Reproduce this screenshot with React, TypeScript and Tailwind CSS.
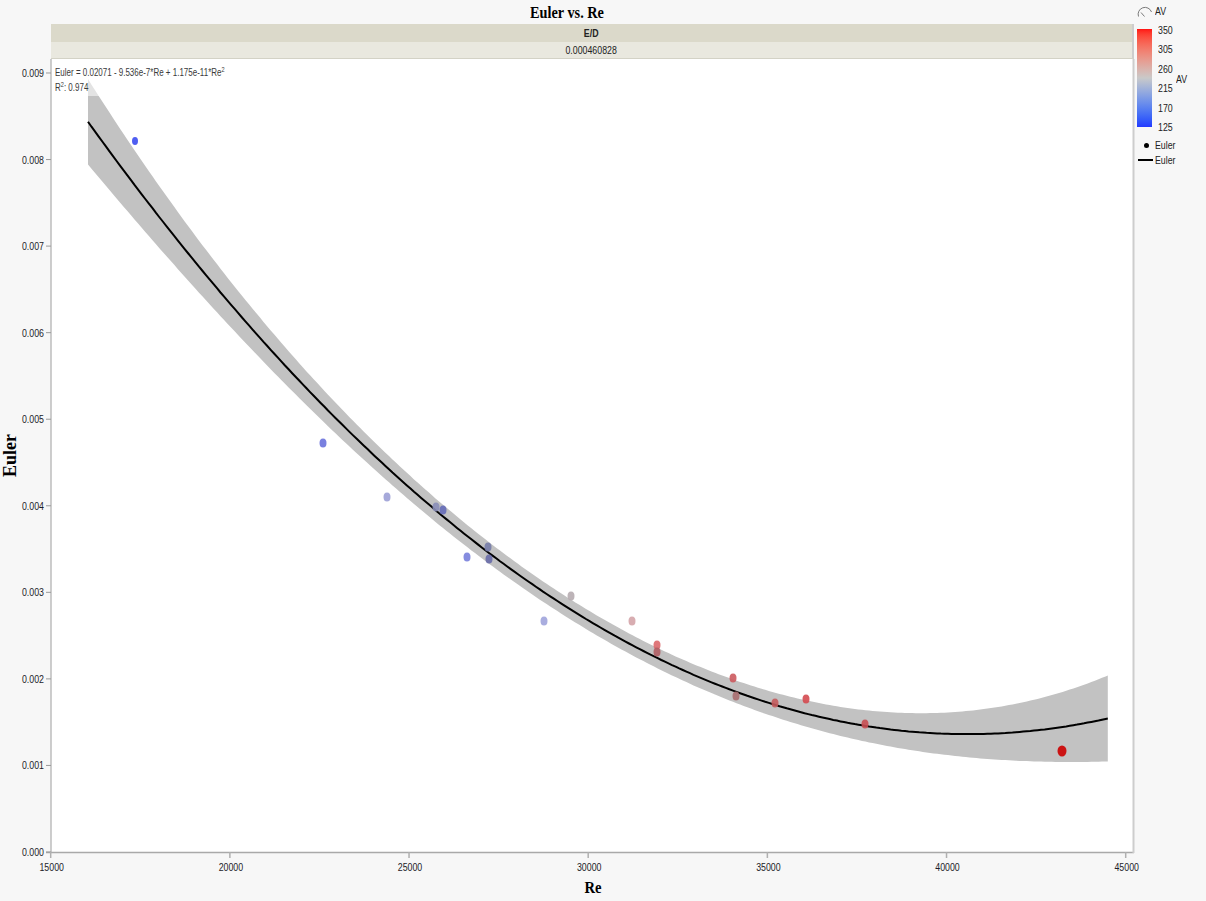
import React from 'react';

// plot scales, measured off the axes (15000 -> x 50.7, 0.000 -> y 852)
const X0 = 50.7;
const XS = 0.035833;
const Y0 = 852;
const YS = 86556;

const px = (re: number) => X0 + (re - 15000) * XS;
const py = (e: number) => Y0 - e * YS;
const euler = (re: number) => 0.02071 - 9.536e-7 * re + 1.175e-11 * re * re;
const halfBand = (re: number) => {
    const u = (re - 30250) / 14250;
    return 10 + 16 * u * u + 17 * u ** 4;
};

const RE_MIN = 16040;
const RE_MAX = 44500;

// [x, y, color, rx, ry]
const points: [number, number, string, number, number][] = [
    [135, 141, '#3c4cf0', 3, 4],
    [323, 443, '#6a72dc', 3.5, 4.5],
    [387, 497, '#9ca0d6', 3.5, 4.5],
    [436, 507, '#8a8eb8', 3.5, 4.5],
    [443, 510, '#656cb8', 3.5, 4.5],
    [467, 557, '#7880dc', 3.5, 4.5],
    [488, 547, '#767ca8', 3.5, 4.5],
    [489, 559, '#686ca8', 3.5, 4.5],
    [544, 621, '#a0a4dc', 3.5, 4.5],
    [571, 596, '#b6acb0', 3.5, 4.5],
    [632, 621, '#d4a4a8', 3.5, 4.5],
    [657, 645, '#dc686c', 3.5, 4.5],
    [657, 652, '#b05e64', 3.5, 4.5],
    [733, 678, '#cc5a5e', 3.5, 4.5],
    [736, 696, '#a86e70', 3.5, 4.5],
    [775, 703, '#c45a5c', 3.5, 4.5],
    [806, 699, '#d44a50', 3.5, 4.5],
    [865, 724, '#c84e52', 3.5, 4.5],
    [1062, 751, '#cc0000', 4.5, 5.5],
];

const legendTicks: [string, string][] = [
    ['350', '#ff3030'],
    ['305', '#e06464'],
    ['260', '#d09494'],
    ['215', '#9094d0'],
    ['170', '#6070e0'],
    ['125', '#3040ff'],
];

function samples() {
    const out: number[] = [];
    for (let re = RE_MIN; re < RE_MAX; re += 100) out.push(re);
    out.push(RE_MAX);
    return out;
}

function Lbl({ x, y, anchor, children, size = 11, bold = false, fill = '#1c1c28' }: {
    x: number; y: number; anchor: 'start' | 'middle' | 'end'; children: React.ReactNode; size?: number; bold?: boolean; fill?: string;
}) {
    return (
        <text
            transform={`translate(${x} ${y}) scale(0.8 1)`}
            textAnchor={anchor}
            fontSize={size}
            fontWeight={bold ? 700 : 400}
            fontFamily="'Liberation Sans', Arial, sans-serif"
            fill={fill}
        >
            {children}
        </text>
    );
}

function Plot() {
    const res = samples();
    const curve = res.map((re) => `${px(re).toFixed(1)},${py(euler(re)).toFixed(1)}`).join(' ');
    const upper = res.map((re) => `${px(re).toFixed(1)},${(py(euler(re)) - halfBand(re)).toFixed(1)}`);
    const lower = res.map((re) => `${px(re).toFixed(1)},${(py(euler(re)) + halfBand(re)).toFixed(1)}`).reverse();
    const band = [...upper, ...lower].join(' ');

    const yTicks = Array.from({ length: 10 }, (_, i) => i);
    const xTicks = [15000, 20000, 25000, 30000, 35000, 40000, 45000];

    return (
        <svg width={1114} height={819} viewBox="20 59 1114 819" className="block overflow-visible">
            <defs>
                <clipPath id="plotArea">
                    <rect x={51} y={59} width={1082} height={793} />
                </clipPath>
            </defs>

            <rect x={51} y={59} width={1082} height={793} fill="#ffffff" />

            <g clipPath="url(#plotArea)">
                <polygon points={band} fill="#c2c2c2" />
                <polyline points={curve} fill="none" stroke="#000" strokeWidth={2} strokeLinejoin="round" />
                {points.map(([x, y, c, rx, ry], i) => (
                    <ellipse key={i} cx={x} cy={y} rx={rx} ry={ry} fill={c} fillOpacity={0.9} />
                ))}
                {/* fit label with its translucent backing */}
                <rect x={53} y={62} width={172} height={34} fill="#ffffff" fillOpacity={0.55} />
            </g>

            <Lbl x={55} y={76} anchor="start" size={10} fill="#3a3a3a">
                Euler = 0.02071 - 9.536e-7*Re + 1.175e-11*Re
                <tspan fontSize={7} dy={-4}>2</tspan>
            </Lbl>
            <Lbl x={55} y={91} anchor="start" size={10} fill="#3a3a3a">
                R
                <tspan fontSize={7} dy={-4}>2</tspan>
                <tspan dy={4}>: 0.974</tspan>
            </Lbl>

            {/* frame */}
            <line x1={51} y1={59} x2={51} y2={853} stroke="#bdbdbd" strokeWidth={1.5} />
            <line x1={46} y1={852.5} x2={1134} y2={852.5} stroke="#a9a9a9" strokeWidth={1.5} />
            <line x1={1133.5} y1={59} x2={1133.5} y2={853} stroke="#cdcdcd" strokeWidth={2} />

            {yTicks.map((i) => {
                const y = Y0 - i * 86.556;
                return (
                    <g key={i}>
                        <line x1={46} y1={y} x2={51} y2={y} stroke="#9a9a9a" strokeWidth={1} />
                        <Lbl x={44} y={y + 4} anchor="end">{(i / 1000).toFixed(3)}</Lbl>
                    </g>
                );
            })}

            {xTicks.map((re) => {
                const x = px(re);
                return (
                    <g key={re}>
                        <line x1={x} y1={852} x2={x} y2={858} stroke="#b0b0b0" strokeWidth={1.5} />
                        <Lbl x={x + 1} y={871} anchor="middle">{re}</Lbl>
                    </g>
                );
            })}
        </svg>
    );
}

function Legend() {
    return (
        <div className="flex w-[72px] flex-col pl-[3px] pt-[5px] font-['Liberation_Sans',Arial,sans-serif] text-[11px] text-[#222]">
            <div className="flex h-[12px] items-center">
                <svg width={16} height={12} viewBox="0 0 16 12" className="block">
                    <path d="M1.5 11.5 A6.5 6.5 0 0 1 14.5 7" fill="none" stroke="#7a7a7a" strokeWidth={1} />
                    <path d="M4 7.5 L7.5 11.5" fill="none" stroke="#7a7a7a" strokeWidth={1} />
                </svg>
                <span className="ml-[2px] inline-block origin-left scale-x-[0.8] leading-[12px]">AV</span>
            </div>

            <div className="mt-[7px] flex h-[109px]">
                <div className="mt-[5px] h-[98px] w-[15px] bg-linear-to-b from-[#ff1010] via-[#c9c9c9] to-[#2438ff]" />
                <div className="flex w-[24px] flex-col justify-between">
                    {legendTicks.map(([v, c]) => (
                        <div key={v} className="flex h-[12px] items-center">
                            <div className="h-[1px] w-[3px]" style={{ backgroundColor: c }} />
                            <span className="ml-[6px] inline-block origin-left scale-x-[0.8] leading-[12px]">{v}</span>
                        </div>
                    ))}
                </div>
                <div className="flex items-center">
                    <span className="inline-block origin-left scale-x-[0.8] leading-[12px]">AV</span>
                </div>
            </div>

            <div className="mt-[6px] flex h-[12px] items-center">
                <div className="flex w-[15px] justify-center pl-[3px]">
                    <div className="h-[5px] w-[5px] rounded-full bg-black" />
                </div>
                <span className="ml-[3px] inline-block origin-left scale-x-[0.8] leading-[12px]">Euler</span>
            </div>
            <div className="mt-[3px] flex h-[12px] items-center">
                <div className="ml-[1px] h-[2px] w-[15px] bg-black" />
                <span className="ml-[2px] inline-block origin-left scale-x-[0.8] leading-[12px]">Euler</span>
            </div>
        </div>
    );
}

export default function App() {
    return (
        <div className="flex h-[901px] w-[1206px] overflow-hidden bg-[#f7f7f7]">
            <div className="flex w-[1134px] flex-col">
                <div className="h-[24px] pt-[3px] text-center font-['Liberation_Serif',serif] text-[17px] leading-[20px] font-bold text-black">
                    <span className="inline-block scale-x-[0.84]">Euler vs. Re</span>
                </div>

                <div className="pl-[51px] font-['Liberation_Sans',Arial,sans-serif] text-[11px] text-[#222]">
                    <div className="flex h-[18px] items-center justify-center border-r-2 border-[#cdcdcd] bg-[#dbd9ca]">
                        <span className="inline-block scale-x-[0.8] font-bold">E/D</span>
                    </div>
                    <div className="flex h-[17px] items-center justify-center border-r-2 border-b border-[#cdcdcd] border-b-[#d3d2c6] bg-[#e9e8df]">
                        <span className="inline-block scale-x-[0.8]">0.000460828</span>
                    </div>
                </div>

                <div className="flex">
                    <div className="flex h-[793px] w-[20px] items-center justify-center">
                        <span className="inline-block -rotate-90 whitespace-nowrap font-['Liberation_Serif',serif] text-[18px] font-bold text-black">
                            Euler
                        </span>
                    </div>
                    <Plot />
                </div>

                <div className="h-[23px] pl-[51px] text-center font-['Liberation_Serif',serif] text-[17px] leading-[20px] font-bold text-black">
                    <span className="inline-block scale-x-[0.86]">Re</span>
                </div>
            </div>

            <Legend />
        </div>
    );
}
